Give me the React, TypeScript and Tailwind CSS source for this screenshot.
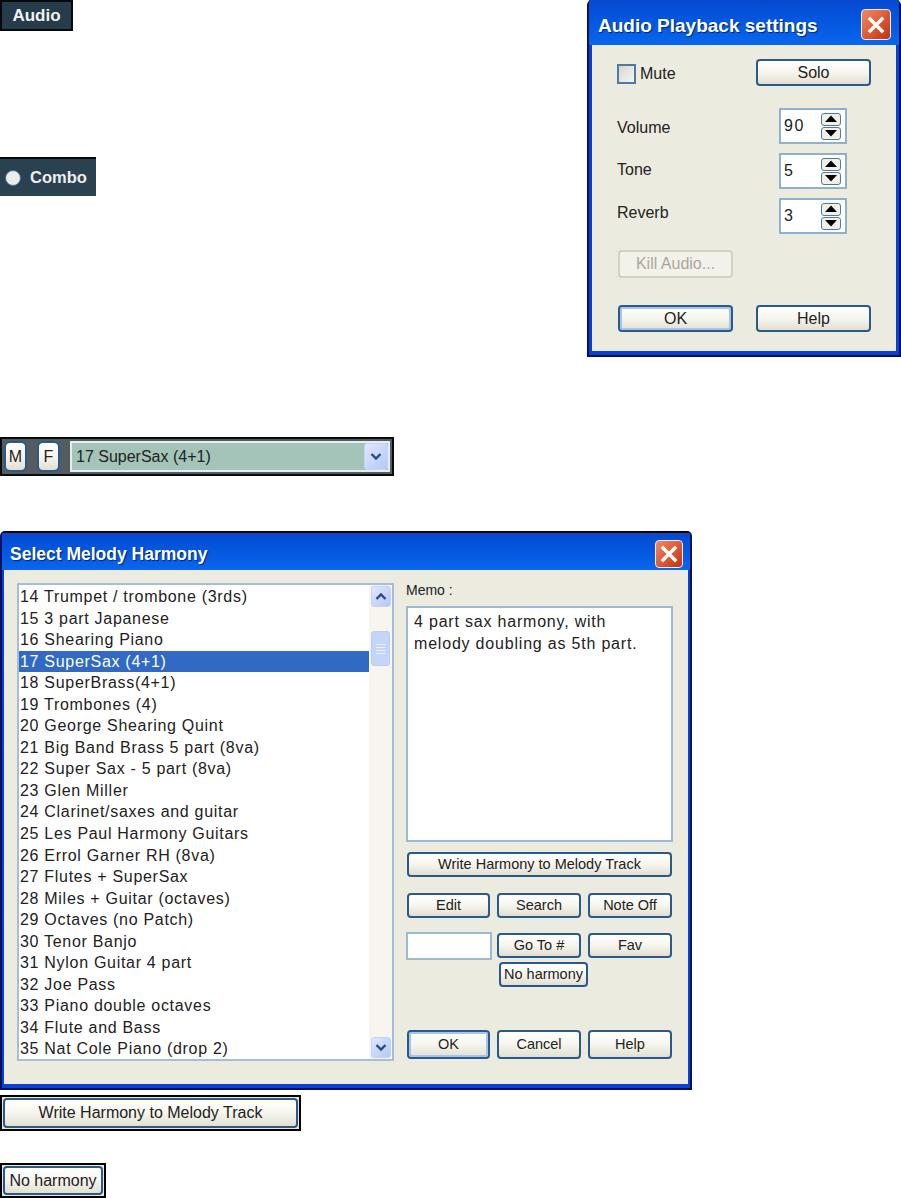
import React from 'react';

const FONT = "font-['Liberation_Sans',Arial,sans-serif]";

const items = [
  '14 Trumpet / trombone (3rds)',
  '15 3 part Japanese',
  '16 Shearing Piano',
  '17 SuperSax (4+1)',
  '18 SuperBrass(4+1)',
  '19 Trombones (4)',
  '20 George Shearing Quint',
  '21 Big Band Brass 5 part (8va)',
  '22 Super Sax - 5 part (8va)',
  '23 Glen Miller',
  '24 Clarinet/saxes and guitar',
  '25 Les Paul Harmony Guitars',
  '26 Errol Garner RH (8va)',
  '27 Flutes + SuperSax',
  '28 Miles + Guitar (octaves)',
  '29 Octaves (no Patch)',
  '30 Tenor Banjo',
  '31 Nylon Guitar 4 part',
  '32 Joe Pass',
  '33 Piano double octaves',
  '34 Flute and Bass',
  '35 Nat Cole Piano (drop 2)',
];

const XpButton = ({
  label,
  className = '',
  focused = false,
}: {
  label: string;
  className?: string;
  focused?: boolean;
}) => (
  <div
    className={`flex items-center justify-center whitespace-nowrap rounded-[4px] border-2 border-[#2a5a8a] bg-gradient-to-b from-white via-[#f6f5ee] to-[#e2dfd1] leading-none text-[#222] ${
      focused ? 'shadow-[inset_0_0_0_2px_#a9c4ea]' : ''
    } ${className}`}
  >
    {label}
  </div>
);

const CloseButton = ({ className = '' }: { className?: string }) => (
  <div
    className={`flex items-center justify-center rounded-[4px] border border-[#e8eef8] bg-gradient-to-br from-[#ee8a68] via-[#df5a34] to-[#bd3212] ${className}`}
  >
    <svg width="18" height="18" viewBox="0 0 18 18">
      <path d="M3 3 L15 15 M15 3 L3 15" stroke="#fff" strokeWidth="3.4" strokeLinecap="square" />
    </svg>
  </div>
);

const ScrollArrow = ({ up, className = 'h-[21px] w-[20px]' }: { up: boolean; className?: string }) => (
  <div className={`flex items-center justify-center rounded-[3px] border border-[#c4d3f5] bg-gradient-to-br from-[#dfe8fd] to-[#b3c8f5] ${className}`}>
    <svg width="12" height="9" viewBox="0 0 12 9">
      <path
        d={up ? 'M1.5 7 L6 2.5 L10.5 7' : 'M1.5 2 L6 6.5 L10.5 2'}
        fill="none"
        stroke="#2c4a80"
        strokeWidth="2.4"
      />
    </svg>
  </div>
);

const SpinField = ({ value, className = '' }: { value: string; className?: string }) => (
  <div className={`flex h-[36px] w-[68px] items-center justify-between border-2 border-[#8fb0d0] bg-white pl-[3px] pr-[4px] ${className}`}>
    <span className="text-[16px] tracking-[1.5px] text-[#222]">{value}</span>
    <div className="flex flex-col gap-[1px]">
      {[true, false].map((up) => (
        <div key={String(up)} className="flex h-[13px] w-[20px] items-center justify-center rounded-[3px] border border-[#4a7ba8] bg-[#f2f0e6]">
          <svg width="14" height="8" viewBox="0 0 14 8">
            <path d={up ? 'M7 0.5 L13 7 L1 7 Z' : 'M1 1 L13 1 L7 7.5 Z'} fill="#000" />
          </svg>
        </div>
      ))}
    </div>
  </div>
);

const SettingRow = ({
  label,
  value,
  className = '',
  labelClass = '',
}: {
  label: string;
  value: string;
  className?: string;
  labelClass?: string;
}) => (
  <div className={`flex items-center justify-between ${className}`}>
    <span className={`text-[16px] text-[#222] ${labelClass}`}>{label}</span>
    <SpinField value={value} className="mr-[24px]" />
  </div>
);

const TITLE_BAR = 'bg-gradient-to-b from-[#0848d0] via-[#0458e0] to-[#0a66ee]';

const App: React.FC = () => (
  <div className={`h-[1198px] w-[901px] overflow-hidden bg-white ${FONT}`}>
    <div className="flex h-[357px] items-start justify-between">
      <div>
        <div className="flex h-[31px] w-[73px] items-center justify-center border-2 border-[#05090d] bg-[#263c4a] pt-[1px] text-[17px] font-bold text-[#f2f2f2]">
          Audio
        </div>
        <div className="mt-[126px] flex h-[39px] w-[96px] items-center gap-[9px] border-t-2 border-t-[#05090d] bg-[#2a4250] pl-[5px] text-[16.5px] font-bold text-[#eeeeee]">
          <span className="h-[16px] w-[16px] rounded-full border border-[#3a6ea0] bg-[#ecebe6]" />
          Combo
        </div>
      </div>

      {/* Audio Playback settings */}
      <div className="flex h-[357px] w-[314px] flex-col rounded-t-[5px] border-2 border-t-0 border-[#04125c] bg-[#0a3fd8] px-[3px] pb-[4px]">
        <div className={`-mx-[3px] flex h-[45px] shrink-0 items-center justify-between pl-[9px] pr-[8px] pt-[7px] text-[19px] font-bold text-white [text-shadow:1px_1px_1px_#00237a] ${TITLE_BAR}`}>
          <span>Audio Playback settings</span>
          <CloseButton className="mb-[3px] h-[31px] w-[30px]" />
        </div>
        <div className="flex-1 bg-[#ecebdf] pl-[25px] pr-[25px] text-[#222]">
          <div className="mt-[14px] flex items-center justify-between">
            <div className="mt-[2px] flex items-center gap-[4px] text-[16px]">
              <span className="h-[20px] w-[19px] border-2 border-[#4f7a9f] bg-gradient-to-br from-[#d8d7cc] to-[#f6f6f2]" />
              Mute
            </div>
            <XpButton label="Solo" className="h-[27px] w-[115px] text-[16px]" />
          </div>
          <SettingRow label="Volume" value="90" className="mt-[22px]" labelClass="pt-[4px]" />
          <SettingRow label="Tone" value="5" className="mt-[9px]" labelClass="pb-[2px]" />
          <SettingRow label="Reverb" value="3" className="mt-[9px]" labelClass="pb-[6px]" />
          <div className="ml-[1px] mt-[16px] flex h-[28px] w-[115px] items-center justify-center rounded-[4px] border-2 border-[#d4d0c2] bg-[#f3f2ea] text-[16px] text-[#a9a79b]">
            Kill Audio...
          </div>
          <div className="ml-[1px] mt-[27px] flex justify-between">
            <XpButton label="OK" className="h-[27px] w-[115px] text-[16px]" focused />
            <XpButton label="Help" className="h-[27px] w-[115px] text-[16px]" />
          </div>
        </div>
      </div>
    </div>

    {/* Harmony selector strip */}
    <div className="mt-[80px] flex h-[39px] w-[394px] items-center gap-[10px] border-2 border-[#0a0a0a] bg-[#555c5f] pl-[2px] pr-[2px]">
      <XpButton label="M" className="h-[31px] w-[23px] !rounded-[6px] text-[16px]" />
      <XpButton label="F" className="h-[31px] w-[23px] !rounded-[6px] text-[16px]" />
      <div className="flex h-[31px] flex-1 items-center justify-between border-2 border-[#e4edf2] bg-[#a4c4b9] pl-[4px] pt-[1px] text-[16px] text-[#222]">
        <span>17 SuperSax (4+1)</span>
        <ScrollArrow up={false} className="-mt-[1px] h-[27px] w-[24px]" />
      </div>
    </div>

    {/* Select Melody Harmony */}
    <div className="mt-[55px] flex h-[559px] w-[692px] flex-col rounded-t-[5px] border-2 border-t-2 border-[#04125c] border-t-black bg-[#0a3fd8] px-[2px] pb-[4px]">
      <div className={`-mx-[2px] flex h-[37px] shrink-0 items-center justify-between pl-[8px] pr-[7px] pt-[5px] text-[17.5px] font-bold text-white [text-shadow:1px_1px_1px_#00237a] ${TITLE_BAR}`}>
        <span>Select Melody Harmony</span>
        <CloseButton className="mb-[1px] h-[28px] w-[28px]" />
      </div>
      <div className="flex flex-1 items-start bg-[#ecebdf] pl-[13px] pt-[13px]">
        <div className="flex h-[478px] w-[377px] justify-between border-2 border-[#a5bdd6] bg-white">
          <div className="w-[351px] pt-[1px] text-[16px] text-[#222]">
            {items.map((item) => (
              <div
                key={item}
                className={`h-[21.55px] pl-[1px] leading-[21.55px] tracking-[0.7px] ${
                  item.startsWith('17') ? 'bg-[#316ac5] text-white' : ''
                }`}
              >
                {item}
              </div>
            ))}
          </div>
          <div className="flex w-[23px] flex-col items-center justify-between bg-[#f6f6ee] py-[1px]">
            <ScrollArrow up />
            <div className="mb-auto mt-[24px] flex h-[35px] w-[19px] flex-col items-center justify-center gap-[2px] rounded-[3px] border border-[#bccdf3] bg-[#c5d5f8]">
              {[0, 1, 2, 3].map((i) => (
                <span key={i} className="h-[1px] w-[9px] bg-[#eaf0fe]" />
              ))}
            </div>
            <ScrollArrow up={false} />
          </div>
        </div>

        <div className="ml-[12px] w-[267px] text-[14.5px] text-[#222]">
          <div className="mt-[-1px] h-[24px] text-[14px] leading-[16px]">Memo :</div>
          <div className="h-[236px] border-2 border-[#9dbad4] bg-white px-[6px] pt-[3px] text-[16px] leading-[22px] tracking-[0.8px]">
            4 part sax harmony, with
            <br />
            melody doubling as 5th part.
          </div>
          <XpButton label="Write Harmony to Melody Track" className="ml-[1px] mt-[10px] h-[25px] w-[265px]" />
          <div className="ml-[1px] mt-[16px] flex w-[265px] justify-between">
            <XpButton label="Edit" className="h-[25px] w-[83px]" />
            <XpButton label="Search" className="h-[25px] w-[84px]" />
            <XpButton label="Note Off" className="h-[25px] w-[84px]" />
          </div>
          <div className="mt-[14px] flex">
            <div className="h-[28px] w-[86px] border-2 border-[#9dbad4] bg-white" />
            <XpButton label="Go To #" className="ml-[5px] mt-[1px] h-[25px] w-[84px]" />
            <XpButton label="Fav" className="ml-[7px] mt-[1px] h-[25px] w-[84px]" />
          </div>
          <XpButton label="No harmony" className="ml-[93px] mt-[2px] h-[25px] w-[89px]" />
          <div className="ml-[1px] mt-[43px] flex w-[265px] justify-between">
            <XpButton label="OK" className="h-[29px] w-[83px]" focused />
            <XpButton label="Cancel" className="h-[29px] w-[84px]" />
            <XpButton label="Help" className="h-[29px] w-[84px]" />
          </div>
        </div>
      </div>
    </div>

    <div className="mt-[5px] h-[36px] w-[301px] border-2 border-black bg-[#e9e7da] p-[1px] text-[16px]">
      <XpButton label="Write Harmony to Melody Track" className="h-full w-full" />
    </div>
    <div className="mt-[32px] h-[35px] w-[106px] border-2 border-black bg-[#e9e7da] p-[1px] text-[16px]">
      <XpButton label="No harmony" className="h-full w-full" />
    </div>
  </div>
);

export default App;
